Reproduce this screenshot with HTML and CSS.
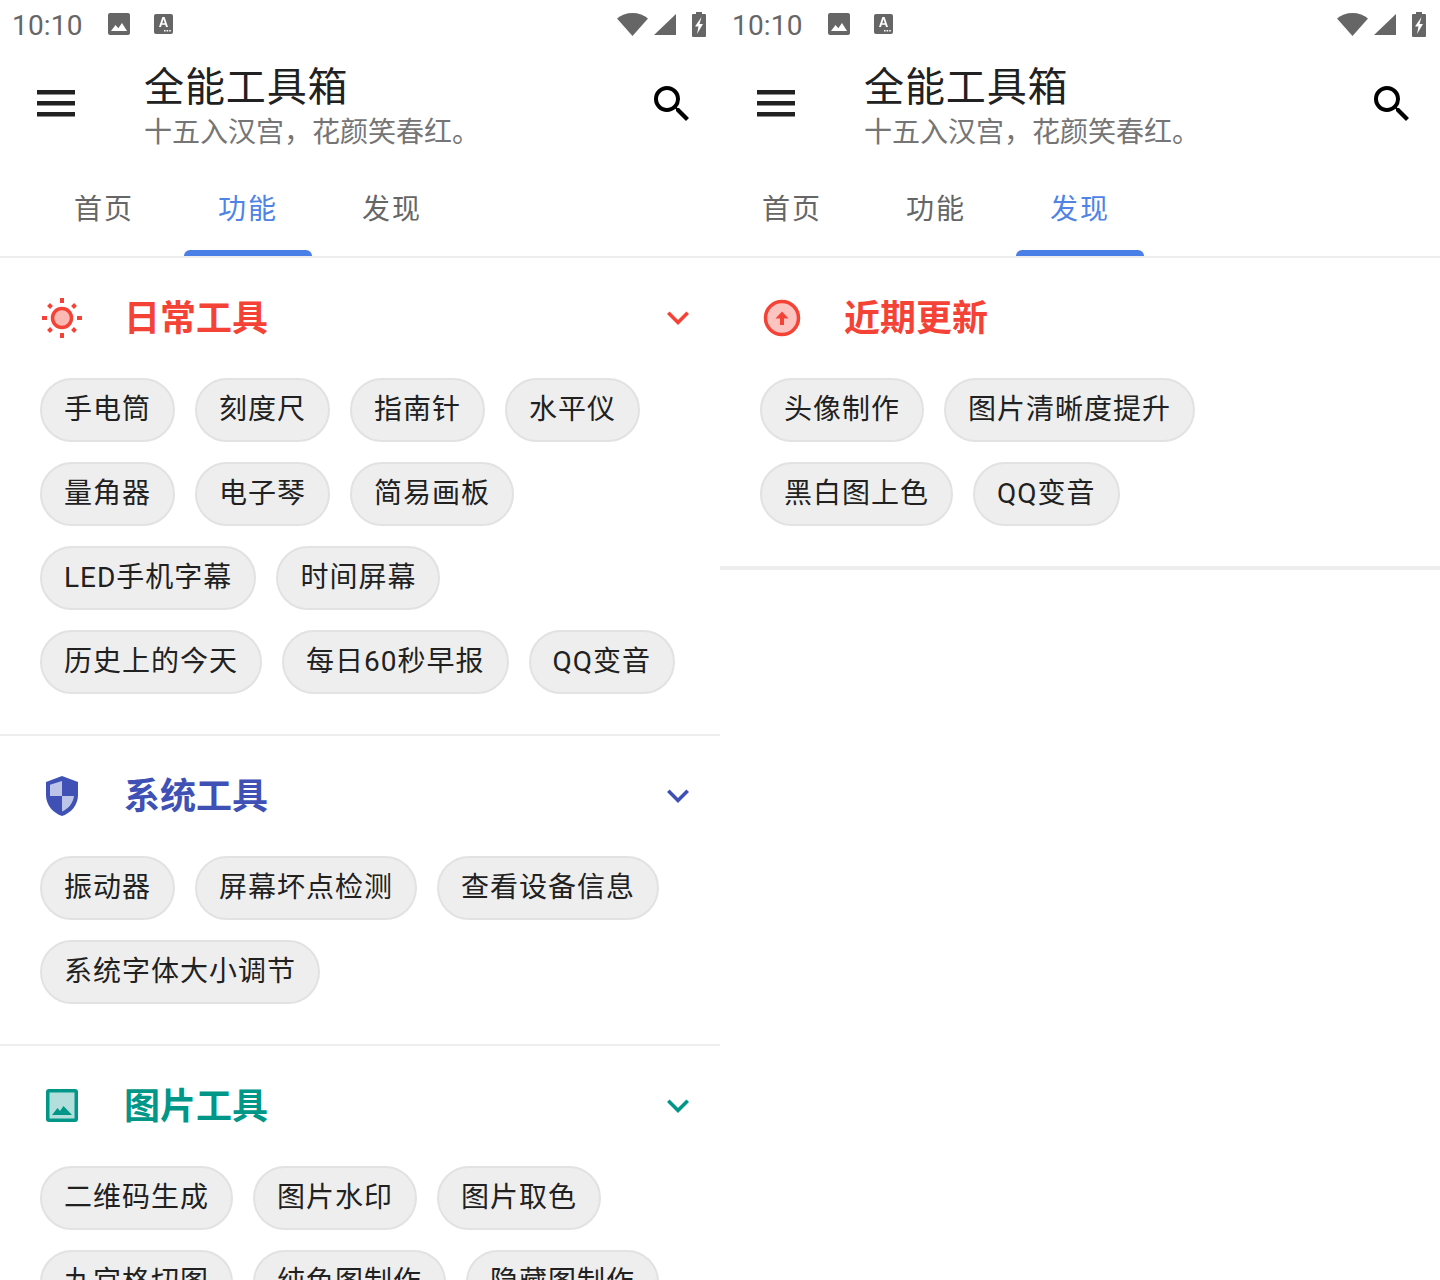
FILE: index.html
```html
<!DOCTYPE html>
<html lang="zh-CN">
<head>
<meta charset="utf-8">
<title>全能工具箱</title>
<link rel="stylesheet" href="styles.css">
</head>
<body>
<svg class="defs" width="0" height="0" aria-hidden="true">
  <symbol id="i-image" viewBox="0 0 22 22"><path fill="#666" d="M2 0h18a2 2 0 0 1 2 2v18a2 2 0 0 1-2 2H2a2 2 0 0 1-2-2V2a2 2 0 0 1 2-2z"/><path fill="#fff" d="M3 18l4.500-6 2.800 3.300L14 10l5 8z"/></symbol>
  <symbol id="i-a" viewBox="0 0 19 20"><rect width="19" height="20" rx="2" fill="#666"/><path fill="#fff" d="M8.400 3h2.200l3.400 10h-2l-.7-2.200H7.700L7 13H5zm-.2 6.200h2.600L9.500 5.200z"/><path fill="#fff" d="M10 16h1.600v1.600H10zm2.600 0h1.600v1.600h-1.600zm2.600 0h1.600v1.600h-1.600z"/></symbol>
  <symbol id="i-wifi" viewBox="0 0 31 23"><path fill="#666" d="M15.500 23L0 5.500C4 2 9.500 0 15.500 0S27 2 31 5.500z"/></symbol>
  <symbol id="i-signal" viewBox="0 0 22 21"><path fill="#666" d="M0 21L22 0v21z"/></symbol>
  <symbol id="i-batt" viewBox="0 0 14 25"><path fill="#666" d="M4 0h6v2h3a1 1 0 0 1 1 1v21a1 1 0 0 1-1 1H1a1 1 0 0 1-1-1V3a1 1 0 0 1 1-1h3z"/><path fill="#fff" d="M9.500 5L3 14.500h3.500L5 22l6-10H7.500z"/></symbol>
  <symbol id="i-menu" viewBox="0 0 38 27"><path fill="#212121" d="M0 0h38v4.500H0zM0 11h38v4.500H0zM0 22h38v4.500H0z"/></symbol>
  <symbol id="i-search" viewBox="0 0 24 24"><path fill="#000" d="M15.500 14h-.79l-.28-.27A6.470 6.470 0 0 0 16 9.500 6.500 6.500 0 1 0 9.500 16c1.610 0 3.090-.59 4.230-1.570l.27.28v.79l5 4.990L20.490 19l-4.990-5zm-6 0C7.010 14 5 11.990 5 9.500S7.010 5 9.500 5 14 7.010 14 9.500 11.990 14 9.500 14z"/></symbol>
  <symbol id="i-chev" viewBox="0 0 24 24"><path fill="none" stroke="currentColor" stroke-width="3.600" d="M2.300 6.800L12 16.500l9.700-9.700"/></symbol>
  <symbol id="i-sun" viewBox="0 0 44 44"><circle cx="22" cy="22" r="9.500" fill="#fbb9b4" stroke="#f44336" stroke-width="3.500"/><path stroke="#f44336" stroke-width="4" d="M22 2v5M22 37v5M2 22h5M37 22h5M8.500 8.500l3 3M32.500 32.500l3 3M8.500 35.500l3-3M32.500 11.500l3-3"/></symbol>
  <symbol id="i-shield" viewBox="0 0 44 44"><path fill="#3f51b5" d="M22 2L38 8v13c0 10-7 18-16 21C13 39 6 31 6 21V8z"/><path fill="#bcc5e8" d="M22 7v15H10V10.700zM22 22h12c-1 7.500-6 13-12 15.500z"/></symbol>
  <symbol id="i-pic" viewBox="0 0 44 44"><rect x="6" y="5" width="32" height="33" rx="3" fill="#009688"/><rect x="9.500" y="8.500" width="25" height="26" fill="#b2dfdb"/><path fill="#009688" d="M12 31l5.500-7 2.500 3 3.500-5 8.500 9z"/></symbol>
  <symbol id="i-up" viewBox="0 0 44 44"><circle cx="22" cy="22" r="16.500" fill="#fbc4c0" stroke="#f44336" stroke-width="3.500"/><path fill="#f44336" d="M22 15.500l6.500 7h-4.500v6.500h-4v-6.500h-4.500z"/></symbol>
</svg>

<main class="screen">
  <section class="pane">
    <header class="status">
      <span class="clock">10:10</span>
      <svg class="st-image"><use href="#i-image"/></svg>
      <svg class="st-a"><use href="#i-a"/></svg>
      <span class="status-right">
        <svg class="st-wifi"><use href="#i-wifi"/></svg>
        <svg class="st-signal"><use href="#i-signal"/></svg>
        <svg class="st-batt"><use href="#i-batt"/></svg>
      </span>
    </header>
    <div class="toolbar">
      <svg class="menu"><use href="#i-menu"/></svg>
      <div class="titles">
        <div class="app-title">全能工具箱</div>
        <div class="app-sub">十五入汉宫，花颜笑春红。</div>
      </div>
      <svg class="search"><use href="#i-search"/></svg>
    </div>
    <nav class="tabs tabs-left">
      <span class="tab">首页</span>
      <span class="tab active">功能</span>
      <span class="tab">发现</span>
    </nav>

    <section class="group">
      <div class="group-head red">
        <svg class="group-icon"><use href="#i-sun"/></svg>
        <h2 class="group-title">日常工具</h2>
        <svg class="chev"><use href="#i-chev"/></svg>
      </div>
      <div class="chips">
        <div class="chip-row"><span class="chip">手电筒</span><span class="chip">刻度尺</span><span class="chip">指南针</span><span class="chip">水平仪</span></div>
        <div class="chip-row"><span class="chip">量角器</span><span class="chip">电子琴</span><span class="chip">简易画板</span></div>
        <div class="chip-row"><span class="chip">LED手机字幕</span><span class="chip">时间屏幕</span></div>
        <div class="chip-row"><span class="chip">历史上的今天</span><span class="chip">每日60秒早报</span><span class="chip">QQ变音</span></div>
      </div>
    </section>

    <section class="group">
      <div class="group-head blue">
        <svg class="group-icon"><use href="#i-shield"/></svg>
        <h2 class="group-title">系统工具</h2>
        <svg class="chev"><use href="#i-chev"/></svg>
      </div>
      <div class="chips">
        <div class="chip-row"><span class="chip">振动器</span><span class="chip">屏幕坏点检测</span><span class="chip">查看设备信息</span></div>
        <div class="chip-row"><span class="chip">系统字体大小调节</span></div>
      </div>
    </section>

    <section class="group">
      <div class="group-head teal">
        <svg class="group-icon"><use href="#i-pic"/></svg>
        <h2 class="group-title">图片工具</h2>
        <svg class="chev"><use href="#i-chev"/></svg>
      </div>
      <div class="chips">
        <div class="chip-row"><span class="chip">二维码生成</span><span class="chip">图片水印</span><span class="chip">图片取色</span></div>
        <div class="chip-row"><span class="chip">九宫格切图</span><span class="chip">纯色图制作</span><span class="chip">隐藏图制作</span></div>
      </div>
    </section>
  </section>

  <section class="pane">
    <header class="status">
      <span class="clock">10:10</span>
      <svg class="st-image"><use href="#i-image"/></svg>
      <svg class="st-a"><use href="#i-a"/></svg>
      <span class="status-right">
        <svg class="st-wifi"><use href="#i-wifi"/></svg>
        <svg class="st-signal"><use href="#i-signal"/></svg>
        <svg class="st-batt"><use href="#i-batt"/></svg>
      </span>
    </header>
    <div class="toolbar">
      <svg class="menu"><use href="#i-menu"/></svg>
      <div class="titles">
        <div class="app-title">全能工具箱</div>
        <div class="app-sub">十五入汉宫，花颜笑春红。</div>
      </div>
      <svg class="search"><use href="#i-search"/></svg>
    </div>
    <nav class="tabs tabs-right">
      <span class="tab">首页</span>
      <span class="tab">功能</span>
      <span class="tab active">发现</span>
    </nav>

    <section class="group group-thick">
      <div class="group-head red">
        <svg class="group-icon"><use href="#i-up"/></svg>
        <h2 class="group-title">近期更新</h2>
      </div>
      <div class="chips">
        <div class="chip-row"><span class="chip">头像制作</span><span class="chip">图片清晰度提升</span></div>
        <div class="chip-row"><span class="chip">黑白图上色</span><span class="chip">QQ变音</span></div>
      </div>
    </section>
  </section>
</main>
</body>
</html>
```

FILE: styles.css
```css
* { box-sizing: border-box; }
html, body { margin: 0; padding: 0; background: #fff; }
body {
  width: 1440px;
  height: 1280px;
  overflow: hidden;
  font-family: Roboto, "Noto Sans CJK SC", sans-serif;
  color: #212121;
}
.defs { display: block; width: 0; height: 0; }
.screen { display: flex; width: 1440px; height: 1280px; overflow: hidden; }
.pane { flex: 0 0 720px; width: 720px; height: 1280px; overflow: hidden; }

.status { display: flex; align-items: center; height: 48px; padding: 0 14px 0 12px; }
.clock { font-size: 28px; line-height: 48px; color: #666; width: 96px; letter-spacing: 0.2px; margin-top: 4px; }
.st-image { width: 22px; height: 22px; margin-right: 24px; }
.st-a { width: 19px; height: 20px; }
.status-right { margin-left: auto; display: flex; align-items: center; }
.st-wifi { width: 31px; height: 23px; margin-right: 6px; }
.st-signal { width: 22px; height: 21px; margin-right: 16px; }
.st-batt { width: 14px; height: 25px; }

.toolbar { display: flex; align-items: center; height: 112px; padding: 0 24px 0 37px; }
.menu { width: 38px; height: 27px; flex: none; margin-top: -2px; }
.titles { flex: 1; margin-left: 70px; margin-top: 6px; }
.app-title { font-size: 40px; line-height: 50px; letter-spacing: 0.9px; color: #212121; margin-left: -1px; }
.app-sub { font-size: 28px; line-height: 36px; color: #757575; margin-top: 2px; margin-left: -1px; }
.search { width: 48px; height: 48px; flex: none; }

.tabs { display: flex; height: 98px; border-bottom: 2px solid #eee; }
.tabs-left { padding-left: 32px; }
.tabs-right { padding-left: 0; }
.tab {
  position: relative;
  width: 144px;
  height: 96px;
  text-align: center;
  font-size: 28px;
  line-height: 100px;
  letter-spacing: 2px;
  color: #666;
}
.tab.active { color: #4f83e6; }
.tab.active::after {
  content: "";
  position: absolute;
  left: 8px;
  right: 8px;
  bottom: 0;
  height: 6px;
  border-radius: 6px 6px 0 0;
  background: #4a7fe8;
}

.group { border-bottom: 2px solid #eee; padding-bottom: 40px; }
.group-thick { border-bottom-width: 4px; }
.group-head { display: flex; align-items: center; height: 120px; padding: 0 30px 0 40px; }
.red { color: #f44336; }
.blue { color: #3f51b5; }
.teal { color: #009688; }
.group-icon { width: 44px; height: 44px; flex: none; }
.group-title { flex: 1; margin: 2px 0 0 40px; font-size: 36px; line-height: 44px; font-weight: 700; }
.chev { width: 24px; height: 24px; flex: none; color: inherit; }

.chips { display: flex; flex-direction: column; gap: 20px; padding: 0 40px; }
.chip-row { display: flex; gap: 20px; }
.chip {
  height: 64px;
  padding: 0 22px;
  border: 2px solid #e2e2e2;
  border-radius: 32px;
  background: #eee;
  font-size: 28px;
  line-height: 60px;
  letter-spacing: 1px;
  color: #212121;
  white-space: nowrap;
}
```
